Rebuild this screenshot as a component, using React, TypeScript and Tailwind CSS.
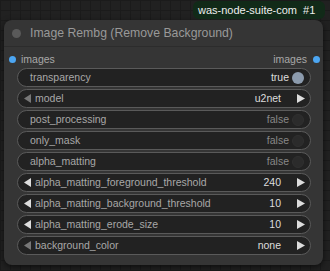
import { ReactNode } from "react";

type Widget = {
  label: string;
  value: string;
  kind: "toggle" | "combo" | "number";
  on?: boolean;
};

const widgets: Widget[] = [
  { label: "transparency", value: "true", kind: "toggle", on: true },
  { label: "model", value: "u2net", kind: "combo" },
  { label: "post_processing", value: "false", kind: "toggle" },
  { label: "only_mask", value: "false", kind: "toggle" },
  { label: "alpha_matting", value: "false", kind: "toggle" },
  { label: "alpha_matting_foreground_threshold", value: "240", kind: "number" },
  { label: "alpha_matting_background_threshold", value: "10", kind: "number" },
  { label: "alpha_matting_erode_size", value: "10", kind: "number" },
  { label: "background_color", value: "none", kind: "combo" },
];

function Arrow({ dir, dim }: { dir: "left" | "right"; dim?: boolean }) {
  const pts = dir === "left" ? "7,0 7,9 0,4.5" : "0,0 0,9 8,4.5";
  return (
    <svg width={dir === "left" ? 7 : 8} height="9" viewBox={dir === "left" ? "0 0 7 9" : "0 0 8 9"} className="shrink-0">
      <polygon points={pts} fill={dim ? "#777777" : "#dddddd"} />
    </svg>
  );
}

function Row({ w }: { w: Widget }) {
  let left: ReactNode = null;
  let right: ReactNode = null;
  if (w.kind === "toggle") {
    right = (
      <div className="flex items-center gap-[3px] pr-[6px]">
        <span className={w.on ? "text-[#dddddd]" : "text-[#888888]"}>{w.value}</span>
        {w.on ? (
          <div className="w-[12px] h-[12px] rounded-full bg-[#8c9bad]" />
        ) : (
          <div className="w-[12px] h-[12px] rounded-full bg-[#2b2b2b] border border-[#303030]" />
        )}
      </div>
    );
  } else {
    left = <Arrow dir="left" dim={w.kind === "combo"} />;
    right = (
      <div className="flex items-center gap-[16px] pr-[5px]">
        <span className="text-[#dddddd]">{w.value}</span>
        <Arrow dir="right" />
      </div>
    );
  }
  return (
    <div className="h-[19px] rounded-full bg-[#222222] border border-[#5a5a5a] flex items-center justify-between text-[10.5px] leading-none">
      <div className={"flex items-center gap-[4px] " + (left ? "pl-[6px]" : "pl-[12px]")}>
        {left}
        <span className="text-[#a8a8a8]">{w.label}</span>
      </div>
      {right}
    </div>
  );
}

export default function App() {
  return (
    <div className="relative w-[330px] h-[271px] overflow-hidden bg-[#212121] bg-[linear-gradient(#1b1b1b_1px,transparent_1px),linear-gradient(90deg,#1b1b1b_1px,transparent_1px)] bg-[length:10px_10px] [font-family:'Liberation_Sans',Arial,sans-serif] pt-[20px] pl-[4px]">
      <div className="w-[319px] h-[245px] rounded-[8px] bg-[#353535] shadow-[0_2px_6px_rgba(0,0,0,0.6)] flex flex-col">
        <div className="h-[27px] shrink-0 flex items-center gap-[9px] pl-[8px] border-b border-[#2c2c2c]">
          <div className="w-[9px] h-[9px] rounded-full bg-[#5a5a5a]" />
          <span className="text-[12.25px] text-[#999999]">Image Rembg (Remove Background)</span>
        </div>
        <div className="h-[14px] mt-[5px] flex items-center justify-between pl-[5px] pr-[3px] text-[10.5px] leading-none text-[#a8a8a8]">
          <div className="flex items-center gap-[5px]">
            <div className="w-[7px] h-[7px] rounded-full bg-[#4ca6f2]" />
            <span>images</span>
          </div>
          <div className="flex items-center gap-[6px]">
            <span>images</span>
            <div className="w-[7px] h-[7px] rounded-full bg-[#4ca6f2]" />
          </div>
        </div>
        <div className="flex flex-col gap-[2px] pl-[13px] pr-[12px] mt-[2px]">
          {widgets.map((w) => (
            <Row key={w.label} w={w} />
          ))}
        </div>
      </div>
      <div className="absolute top-[1px] left-[193px] h-[18px] rounded-[6px] bg-[#112a18] flex items-center gap-[6px] pl-[5px] pr-[10px] text-[11px] leading-none text-[#eeeeee]">
        <span>was-node-suite-com</span>
        <span>#1</span>
      </div>
    </div>
  );
}
